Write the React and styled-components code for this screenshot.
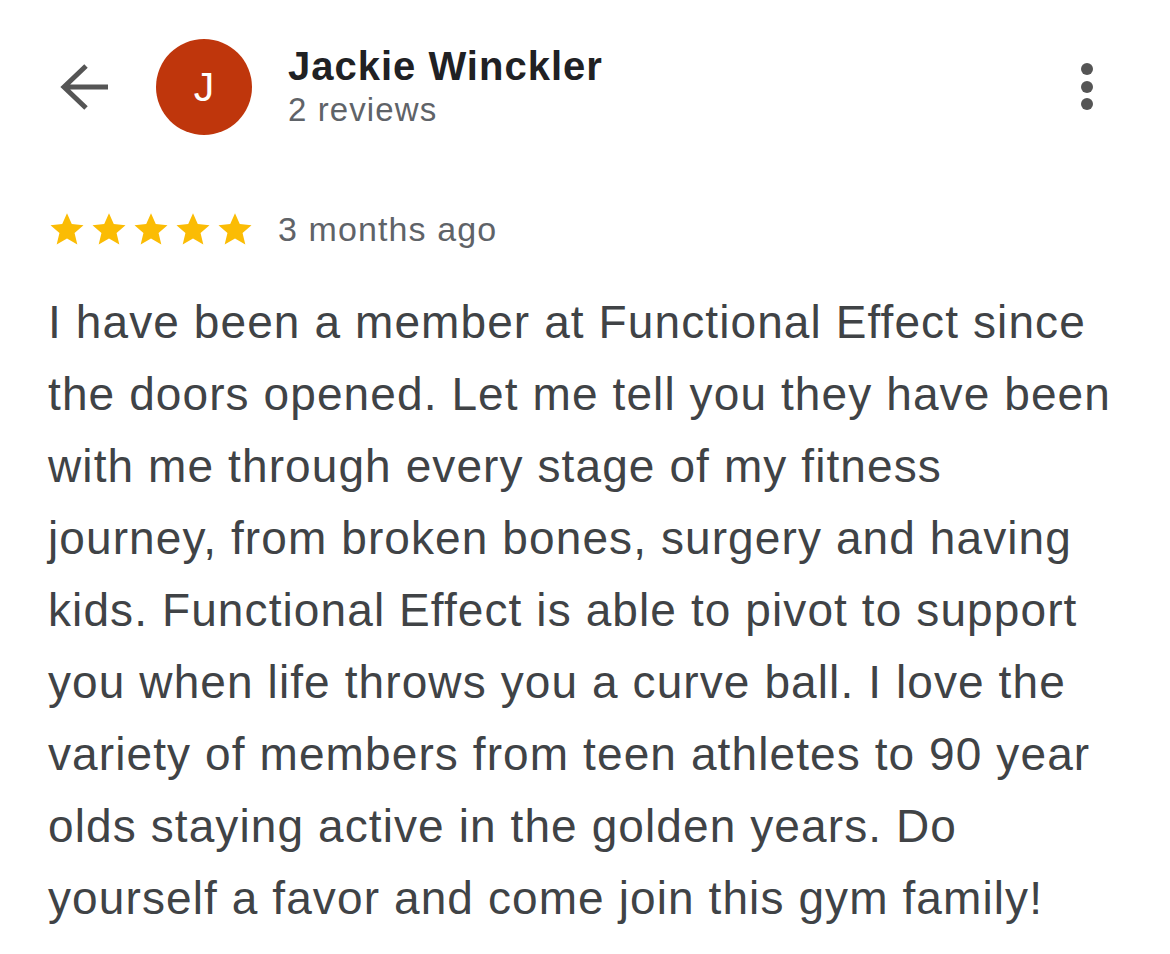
import React from "react";
import styled, { createGlobalStyle } from "styled-components";

const GlobalStyle = createGlobalStyle`
  html, body {
    margin: 0;
    padding: 0;
    background: #ffffff;
  }
  body {
    font-family: "Liberation Sans", Arial, Helvetica, sans-serif;
  }
`;

const Page = styled.div`
  width: 1170px;
  height: 954px;
  box-sizing: border-box;
  padding: 38px 48px 0 48px;
  background: #fff;
  overflow: hidden;
`;

const Header = styled.div`
  display: flex;
  align-items: center;
  height: 98px;
`;

const IconButton = styled.button`
  border: none;
  background: none;
  padding: 0;
  display: flex;
  align-items: center;
  justify-content: center;
  color: #555;
  cursor: pointer;
`;

const BackButton = styled(IconButton)`
  width: 108px;
  height: 60px;
  justify-content: flex-start;
  padding-left: 12px;
`;

const Avatar = styled.div`
  width: 96px;
  height: 96px;
  border-radius: 50%;
  background: ${(p) => p.color};
  color: #fff;
  font-size: 41px;
  display: flex;
  align-items: center;
  justify-content: center;
  flex-shrink: 0;
`;

const Author = styled.div`
  display: flex;
  flex-direction: column;
  margin-left: 36px;
  flex: 1;
`;

const Name = styled.div`
  font-size: 40px;
  font-weight: 700;
  letter-spacing: 1px;
  color: #202124;
  line-height: 46px;
`;

const SubText = styled.div`
  font-size: ${(p) => p.size || 33}px;
  letter-spacing: 1.1px;
  color: #5f6368;
  line-height: 42px;
`;

const MoreButton = styled(IconButton)`
  width: 40px;
  height: 60px;
  margin-right: 15px;
`;

const MetaRow = styled.div`
  display: flex;
  align-items: center;
  margin-top: 72px;
  gap: 24px;
`;

const Stars = styled.div`
  display: flex;
  gap: 4px;
`;

const Body = styled.p`
  margin: 36px 0 0 0;
  font-size: 46px;
  line-height: 72px;
  letter-spacing: 1.1px;
  color: #404346;
  width: 1068px;
`;

const Star = () => (
  <svg width="38" height="37" viewBox="0 0 24 24">
    <path
      fill="#FBBC04"
      d="M12 1.5l3.1 7 7.6.7-5.8 5 1.8 7.5L12 17.8l-6.7 3.9 1.8-7.5-5.8-5 7.6-.7z"
    />
  </svg>
);

export default function App() {
  const text =
    "I have been a member at Functional Effect since the doors opened. Let me tell you they have been with me through every stage of my fitness journey, from broken bones, surgery and having kids. Functional Effect is able to pivot to support you when life throws you a curve ball. I love the variety of members from teen athletes to 90 year olds staying active in the golden years. Do yourself a favor and come join this gym family!";

  return (
    <>
      <GlobalStyle />
      <Page>
        <Header>
          <BackButton aria-label="Back">
            <svg width="48" height="48" viewBox="0 0 48 48">
              <path
                fill="none"
                stroke="#555"
                strokeWidth="5"
                d="M4 24H48M26 3L4 24 26 45"
              />
            </svg>
          </BackButton>
          <Avatar color="#BF360C">J</Avatar>
          <Author>
            <Name>Jackie Winckler</Name>
            <SubText>2 reviews</SubText>
          </Author>
          <MoreButton aria-label="More">
            <svg width="14" height="48" viewBox="0 0 14 48">
              <circle cx="7" cy="6" r="6" fill="#555" />
              <circle cx="7" cy="24" r="6" fill="#555" />
              <circle cx="7" cy="41" r="6" fill="#555" />
            </svg>
          </MoreButton>
        </Header>
        <MetaRow>
          <Stars>
            {[0, 1, 2, 3, 4].map((i) => (
              <Star key={i} />
            ))}
          </Stars>
          <SubText size={34}>3 months ago</SubText>
        </MetaRow>
        <Body>{text}</Body>
      </Page>
    </>
  );
}
